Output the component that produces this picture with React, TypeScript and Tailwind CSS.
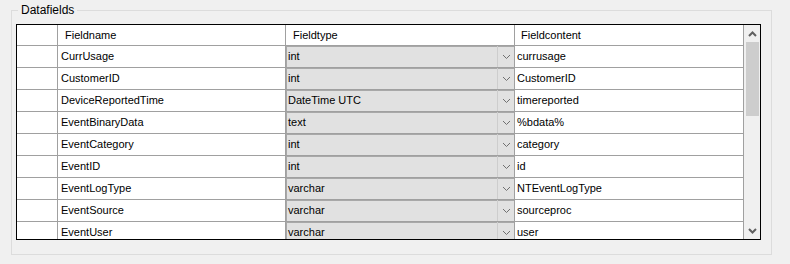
const rows = [
  { name: 'CurrUsage', type: 'int', content: 'currusage' },
  { name: 'CustomerID', type: 'int', content: 'CustomerID' },
  { name: 'DeviceReportedTime', type: 'DateTime UTC', content: 'timereported' },
  { name: 'EventBinaryData', type: 'text', content: '%bdata%' },
  { name: 'EventCategory', type: 'int', content: 'category' },
  { name: 'EventID', type: 'int', content: 'id' },
  { name: 'EventLogType', type: 'varchar', content: 'NTEventLogType' },
  { name: 'EventSource', type: 'varchar', content: 'sourceproc' },
  { name: 'EventUser', type: 'varchar', content: 'user' },
];

function Chevron({ up = false, bold = false }: { up?: boolean; bold?: boolean }) {
  return (
    <svg width="9" height="6" viewBox="0 0 9 6" className={up ? 'rotate-180' : ''}>
      <path
        d="M1 1 L4.5 4.5 L8 1"
        fill="none"
        stroke={bold ? '#606060' : '#707070'}
        strokeWidth={bold ? 2 : 1}
      />
    </svg>
  );
}

function ComboCell({ value }: { value: string }) {
  return (
    <div className="flex h-full w-[229px] shrink-0 border-r border-[#a0a0a0] bg-[#e1e1e1] shadow-[inset_1px_1px_0_#a8a8a8]">
      <div className="flex flex-1 items-center pl-[2px]">{value}</div>
      <div className="flex w-[17px] items-center justify-center border-l border-[#cdcdcd]">
        <Chevron />
      </div>
    </div>
  );
}

export default function App() {
  return (
    <div
      className="h-[264px] w-[790px] overflow-hidden bg-[#f0f0f0] pt-[10px] pl-[11px] text-[11px] text-black"
      style={{ fontFamily: '"Liberation Sans", Arial, sans-serif' }}
    >
      <div className="relative h-[245px] w-[761px] border border-[#dcdcdc] pt-[13px] pl-[4px]">
        <span className="absolute -top-[8px] left-[6px] bg-[#f0f0f0] px-[3px] text-[12px] leading-[14px]">
          Datafields
        </span>
        <div className="flex h-[216px] w-[745px] border border-black bg-white">
          <div className="h-full w-[726px] overflow-hidden">
            <div className="flex h-[21px] border-b border-[#a0a0a0]">
              <div className="w-[41px] shrink-0 border-r border-[#a0a0a0]" />
              <div className="flex w-[228px] shrink-0 items-center border-r border-[#a0a0a0] pl-[7px]">
                Fieldname
              </div>
              <div className="flex w-[229px] shrink-0 items-center border-r border-[#a0a0a0] pl-[7px]">
                Fieldtype
              </div>
              <div className="flex flex-1 items-center pl-[6px]">Fieldcontent</div>
            </div>
            {rows.map((r) => (
              <div key={r.name} className="flex h-[22px] border-b border-[#a0a0a0]">
                <div className="w-[41px] shrink-0 border-r border-[#a0a0a0]" />
                <div className="flex w-[228px] shrink-0 items-center border-r border-[#a0a0a0] pl-[3px]">
                  {r.name}
                </div>
                <ComboCell value={r.type} />
                <div className="flex flex-1 items-center pl-[2px]">{r.content}</div>
              </div>
            ))}
          </div>
          <div className="flex h-full w-[17px] shrink-0 flex-col border-l border-[#a0a0a0] bg-[#f0f0f0]">
            <div className="flex h-[17px] items-center justify-center">
              <Chevron up bold />
            </div>
            <div className="mx-auto h-[74px] w-[13px] bg-[#cdcdcd]" />
            <div className="flex-1" />
            <div className="flex h-[17px] items-center justify-center">
              <Chevron bold />
            </div>
          </div>
        </div>
      </div>
    </div>
  );
}
